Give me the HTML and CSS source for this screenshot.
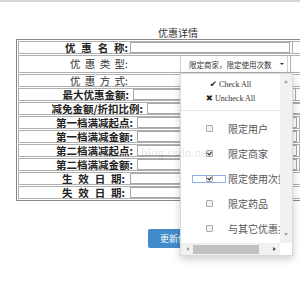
FILE: index.html
```html
<!DOCTYPE html>
<html lang="zh-CN">
<head>
    <meta charset="UTF-8">
    <title>优惠详情</title>
    <link rel="stylesheet" href="styles.css">
</head>
<body>
    <div class="page">
        <div class="title">优惠详情</div>
        <div class="grid">
            <div class="row">
                <span class="label w-name strong">优 惠 名 称:</span>
                <input type="text" class="field">
                <span class="tail"></span>
            </div>
            <div class="row row-tall">
                <span class="label w-name thin">优 惠 类 型:</span>
                <button type="button" class="select-btn">限定商家，限定使用次数 <span class="caret"></span></button>
                <span class="tail"></span>
            </div>
            <div class="row">
                <span class="label w-name thin">优 惠 方 式:</span>
            </div>
            <div class="row">
                <span class="label w-max strong">最大优惠金额:</span>
                <input type="text" class="field">
                <span class="tail"></span>
            </div>
            <div class="row">
                <span class="label w-rate strong">减免金额/折扣比例:</span>
                <input type="text" class="field">
                <span class="tail"></span>
            </div>
            <div class="row">
                <span class="label w-step strong">第一档满减起点:</span>
                <input type="text" class="field">
                <span class="tail"></span>
            </div>
            <div class="row">
                <span class="label w-step strong">第一档满减金额:</span>
                <input type="text" class="field">
                <span class="tail"></span>
            </div>
            <div class="row">
                <span class="label w-step strong">第二档满减起点:</span>
                <input type="text" class="field">
                <span class="tail"></span>
            </div>
            <div class="row">
                <span class="label w-step strong">第二档满减金额:</span>
                <input type="text" class="field">
                <span class="tail"></span>
            </div>
            <div class="row">
                <span class="label w-date strong">生 效 日 期:</span>
                <input type="text" class="field">
                <span class="tail"></span>
            </div>
            <div class="row">
                <span class="label w-date strong">失 效 日 期:</span>
                <input type="text" class="field">
                <span class="tail"></span>
            </div>
        </div>
        <div class="actions">
            <button type="button" class="btn-primary">更新信息</button>
        </div>
    </div>

    <div class="watermark">blog.csdn.net/</div>

    <div class="multiselect">
        <div class="options">
            <div class="all-item"><span class="icon">✔</span>Check All</div>
            <div class="all-item"><span class="icon">✖</span>Uncheck All</div>
            <div class="divider"></div>
            <div class="option">
                <span class="box-wrap"><span class="check"></span></span>
                <span class="option-text">限定用户</span>
            </div>
            <div class="option">
                <span class="box-wrap"><span class="check on"></span></span>
                <span class="option-text">限定商家</span>
            </div>
            <div class="option">
                <span class="box-wrap focused"><span class="check on"></span></span>
                <span class="option-text">限定使用次数</span>
            </div>
            <div class="option">
                <span class="box-wrap"><span class="check"></span></span>
                <span class="option-text">限定药品</span>
            </div>
            <div class="option">
                <span class="box-wrap"><span class="check"></span></span>
                <span class="option-text">与其它优惠共享</span>
            </div>
        </div>
        <div class="vbar">
            <span class="arrow arrow-up"></span>
            <span class="arrow arrow-down"></span>
        </div>
        <div class="hbar">
            <span class="arrow-box"><span class="arrow arrow-left"></span></span>
            <span class="thumb"></span>
            <span class="arrow-box end"><span class="arrow arrow-right"></span></span>
        </div>
        <div class="corner"></div>
    </div>
</body>
</html>
```

FILE: styles.css
```css
html, body {
    overflow: hidden;
}

body {
    margin: 0;
    border-top: 2px solid #d6d6d6;
    font-family: 'Noto Sans CJK SC', sans-serif;
    color: #222;
    background: #fff;
}

.page {
    width: 324px;
    margin-left: 16px;
    padding-top: 25px;
}

.title {
    text-align: center;
    font-size: 10px;
    line-height: 12px;
    color: #333;
}

.grid {
    border: 1px solid #888;
    padding: 1px;
    display: flex;
    flex-direction: column;
    gap: 1px;
}

.row {
    display: flex;
    align-items: center;
    height: 11px;
    border: 1px solid #b0b0b0;
}

.row-tall {
    height: 16px;
    align-items: flex-start;
}

.label {
    flex: none;
    box-sizing: border-box;
    text-align: right;
    font-size: 10.5px;
    line-height: 11px;
    white-space: nowrap;
    padding-right: 4px;
}

.row-tall .label {
    padding-top: 2px;
}

.strong {
    font-weight: bold;
    word-spacing: 3.5px;
}

.thin {
    color: #333;
    word-spacing: 2px;
}

.w-name { width: 111px; padding-right: 2px; }
.w-max { width: 114px; }
.w-rate { width: 128px; }
.w-step { width: 118px; }
.w-date { width: 111px; padding-right: 5px; }

.field {
    flex: none;
    box-sizing: border-box;
    width: 160px;
    height: 11px;
    margin: 0;
    padding: 0;
    border: 1px solid #a8a8a8;
    background: #fff;
}

.tail {
    flex: 1;
    align-self: stretch;
    margin-left: 2px;
    border-left: 1px solid #b0b0b0;
}

.select-btn {
    flex: none;
    box-sizing: border-box;
    width: 108px;
    height: 16px;
    margin: 0 0 0 50px;
    padding: 0 0 0 8px;
    border: 1px solid #d0d0d0;
    border-top: 0;
    border-bottom: 0;
    background: #fff;
    font-family: 'Noto Sans CJK SC', sans-serif;
    font-size: 7.5px;
    color: #333;
    text-align: left;
    white-space: nowrap;
    display: flex;
    align-items: center;
}

.caret {
    display: inline-block;
    margin-left: 8px;
    border-left: 2px solid transparent;
    border-right: 2px solid transparent;
    border-top: 2px solid #333;
}

.actions {
    text-align: center;
    margin-top: 22px;
}

.btn-primary {
    height: 19px;
    padding: 0 12px;
    border: 0;
    border-radius: 2px;
    background: #428bca;
    color: #fff;
    font-family: 'Noto Sans CJK SC', sans-serif;
    font-size: 9px;
}

.watermark {
    position: absolute;
    left: 141px;
    top: 145px;
    font-family: 'Liberation Serif', serif;
    font-size: 13px;
    color: rgba(0, 0, 0, 0.12);
    z-index: 2;
    pointer-events: none;
}

.multiselect {
    position: absolute;
    left: 180px;
    top: 73px;
    width: 113px;
    height: 183px;
    box-sizing: border-box;
    border: 1px solid rgba(0, 0, 0, 0.15);
    background: #fff;
    box-shadow: 0 3px 8px rgba(0, 0, 0, 0.2);
    display: grid;
    grid-template-columns: 1fr 12px;
    grid-template-rows: 1fr 12px;
}

.options {
    overflow: hidden;
    padding-top: 3px;
}

.all-item {
    height: 14px;
    line-height: 14px;
    text-align: center;
    font-family: 'Liberation Serif', serif;
    font-size: 8px;
    color: #333;
    white-space: nowrap;
}

.icon {
    font-family: 'DejaVu Sans', sans-serif;
    font-size: 8.5px;
    color: #222;
    margin-right: 2px;
}

.divider {
    height: 1px;
    margin: 5px 0;
    background: #e5e5e5;
}

.option {
    display: flex;
    align-items: center;
    height: 25px;
    padding-left: 11px;
    white-space: nowrap;
    font-size: 10px;
    color: #555;
}

.box-wrap {
    flex: none;
    box-sizing: border-box;
    width: 34px;
    height: 8px;
    display: flex;
    justify-content: center;
    align-items: center;
}

.box-wrap.focused {
    border: 1px solid #8ab0e6;
}

.check {
    position: relative;
    box-sizing: border-box;
    width: 7px;
    height: 7px;
    border: 1px solid #aaa;
    border-radius: 1px;
    background: #f2f2f2;
}

.check.on::after {
    content: '';
    position: absolute;
    left: 1px;
    top: 0;
    width: 2px;
    height: 3px;
    border-right: 1px solid #222;
    border-bottom: 1px solid #222;
    transform: rotate(40deg);
}

.option-text {
    margin-left: 2px;
}

.vbar {
    background: #f1f1f1;
    display: flex;
    flex-direction: column;
    justify-content: space-between;
    align-items: center;
    padding: 6px 0 7px;
}

.hbar {
    background: #f1f1f1;
    display: flex;
    align-items: center;
}

.arrow-box {
    flex: none;
    width: 12px;
    display: flex;
    justify-content: center;
}

.arrow-box.end {
    margin-left: auto;
}

.thumb {
    width: 66px;
    height: 9px;
    background: #c1c1c1;
}

.corner {
    background: #fff;
}

.arrow {
    display: block;
    width: 0;
    height: 0;
}

.arrow-up {
    border-left: 2px solid transparent;
    border-right: 2px solid transparent;
    border-bottom: 3px solid #a3a3a3;
}

.arrow-down {
    border-left: 2px solid transparent;
    border-right: 2px solid transparent;
    border-top: 3px solid #a3a3a3;
}

.arrow-left {
    border-top: 2px solid transparent;
    border-bottom: 2px solid transparent;
    border-right: 3px solid #a3a3a3;
}

.arrow-right {
    border-top: 2px solid transparent;
    border-bottom: 2px solid transparent;
    border-left: 3px solid #505050;
}
```
